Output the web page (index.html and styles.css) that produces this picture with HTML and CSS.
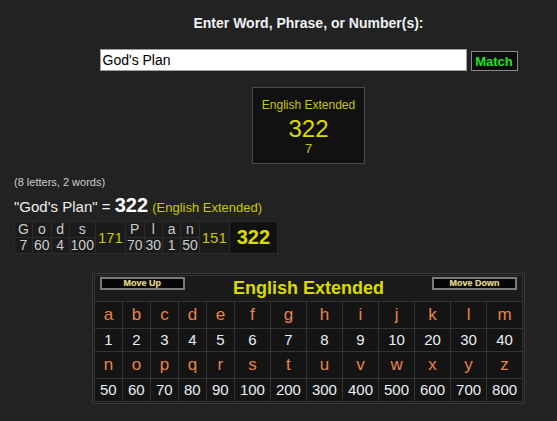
FILE: index.html
```html
<!DOCTYPE html>
<html>
<head>
<meta charset="utf-8">
<link rel="stylesheet" href="styles.css">
</head>
<body>
<div class="top">
  <h1 class="prompt">Enter Word, Phrase, or Number(s):</h1>
  <div class="search">
    <input class="search-input" type="text" value="God's Plan">
    <button class="match-btn">Match</button>
  </div>
  <div class="result-box">
    <div class="result-name">English Extended</div>
    <div class="result-value">322</div>
    <div class="result-reduced">7</div>
  </div>
</div>

<div class="summary">
  <div class="count">(8 letters, 2 words)</div>
  <div class="phrase">"God's Plan" = <b class="phrase-total">322</b> <span class="phrase-cipher">(English Extended)</span></div>
  <table class="breakdown">
    <tr class="bd-letters">
      <td>G</td><td>o</td><td>d</td><td>s</td>
      <td class="bd-sub" rowspan="2">171</td>
      <td>P</td><td>l</td><td>a</td><td>n</td>
      <td class="bd-sub" rowspan="2">151</td>
      <td class="bd-total" rowspan="2">322</td>
    </tr>
    <tr class="bd-values">
      <td>7</td><td>60</td><td>4</td><td>100</td>
      <td>70</td><td>30</td><td>1</td><td>50</td>
    </tr>
  </table>
</div>

<div class="chart-area">
  <div class="chart-frame">
    <table class="chart">
      <tr>
        <td class="chart-head" colspan="13">
          <div class="head-bar">
            <button class="move-btn">Move Up</button>
            <span class="chart-title">English Extended</span>
            <button class="move-btn">Move Down</button>
          </div>
        </td>
      </tr>
      <tr class="row-letters">
        <td>a</td><td>b</td><td>c</td><td>d</td><td>e</td><td>f</td><td>g</td><td>h</td><td>i</td><td>j</td><td>k</td><td>l</td><td>m</td>
      </tr>
      <tr class="row-values">
        <td>1</td><td>2</td><td>3</td><td>4</td><td>5</td><td>6</td><td>7</td><td>8</td><td>9</td><td>10</td><td>20</td><td>30</td><td>40</td>
      </tr>
      <tr class="row-letters">
        <td>n</td><td>o</td><td>p</td><td>q</td><td>r</td><td>s</td><td>t</td><td>u</td><td>v</td><td>w</td><td>x</td><td>y</td><td>z</td>
      </tr>
      <tr class="row-values">
        <td>50</td><td>60</td><td>70</td><td>80</td><td>90</td><td>100</td><td>200</td><td>300</td><td>400</td><td>500</td><td>600</td><td>700</td><td>800</td>
      </tr>
    </table>
  </div>
</div>
</body>
</html>
```

FILE: styles.css
```css
html, body {
  margin: 0;
  padding: 0;
}
body {
  background: #222222;
  font-family: Arial, "Liberation Sans", sans-serif;
  color: #eeeeee;
}

.top {
  padding-left: 60px;
  text-align: center;
}
.prompt {
  margin: 0;
  padding-top: 15px;
  font-size: 14px;
  line-height: 16px;
  font-weight: bold;
  color: #eef2f6;
}
.search {
  margin-top: 18px;
  display: flex;
  justify-content: center;
  align-items: flex-end;
  gap: 4px;
}
.search-input {
  box-sizing: border-box;
  width: 367px;
  height: 22px;
  margin: 0;
  padding: 0 2px;
  border: 1px solid #a0a0a0;
  background: #ffffff;
  color: #000000;
  font-family: Arial, "Liberation Sans", sans-serif;
  font-size: 14px;
}
.match-btn {
  box-sizing: border-box;
  width: 47px;
  height: 20px;
  margin: 0;
  padding: 0;
  border: 1px solid #8a8a8a;
  background: #0c0c0c;
  color: #22e022;
  font-family: Arial, "Liberation Sans", sans-serif;
  font-size: 13px;
  font-weight: bold;
}

.result-box {
  display: inline-block;
  margin-top: 16px;
  padding: 10px 9px 7px;
  border: 1px solid #4a4a4a;
  background: #111111;
  color: #c8c800;
}
.result-name {
  font-size: 12px;
  line-height: 14px;
}
.result-value {
  margin-top: 4px;
  font-size: 24px;
  line-height: 26px;
  color: #dcdc00;
}
.result-reduced {
  font-size: 13px;
  line-height: 14px;
}

.summary {
  padding-left: 14px;
}
.count {
  margin-top: 12px;
  font-size: 11px;
  line-height: 13px;
  color: #cccccc;
}
.phrase {
  margin-top: 5px;
  font-size: 15px;
  line-height: 22px;
  color: #eeeeee;
}
.phrase-total {
  font-size: 20px;
  color: #ffffff;
}
.phrase-cipher {
  font-size: 13px;
  color: #c8c800;
}

.breakdown {
  margin-top: 2px;
  border-collapse: separate;
  border-spacing: 0;
  border-top: 1px solid #2a2a2a;
  border-left: 1px solid #2a2a2a;
  font-size: 14px;
  line-height: 15px;
  color: #cccccc;
}
.breakdown td {
  min-width: 15px;
  padding: 0 1px;
  border-right: 1px solid #2c2c2c;
  border-bottom: 1px solid #2c2c2c;
  text-align: center;
  background: #1b1b1b;
}
.breakdown .bd-sub {
  padding: 0 2px;
  font-size: 15px;
  color: #c8c800;
}
.breakdown .bd-total {
  padding: 0 7px;
  background: #111111;
  font-size: 20px;
  font-weight: bold;
  color: #dcdc00;
}

.chart-area {
  padding-left: 60px;
  margin-top: 19px;
  text-align: center;
}
.chart-frame {
  display: inline-block;
  padding: 1px;
  border: 1px solid #3a3a3a;
  background: #1a1a1a;
}
.chart {
  border-collapse: collapse;
}
.chart td {
  width: 17px;
  border: 1px solid #343434;
  padding: 0 5px;
  text-align: center;
  background: #141414;
}
.chart .chart-head {
  width: auto;
  padding: 1px 5px 2px;
  background: #1b1b1b;
}
.head-bar {
  display: flex;
  justify-content: space-between;
  align-items: flex-start;
}
.move-btn {
  box-sizing: border-box;
  width: 85px;
  height: 13px;
  margin: 0;
  padding: 0;
  border: 2px solid #7a7a7a;
  background: #050505;
  color: #e2d890;
  font-family: Arial, "Liberation Sans", sans-serif;
  font-size: 9px;
  line-height: 9px;
  font-weight: bold;
  text-shadow: 0 0 1px #7a6a30;
}
.chart-title {
  font-size: 18px;
  line-height: 22px;
  font-weight: bold;
  color: #dada00;
}
.row-letters td {
  font-size: 17px;
  line-height: 26px;
  color: #e8844a;
}
.row-values td {
  font-size: 15px;
  line-height: 22px;
  color: #e8eef6;
}
```
